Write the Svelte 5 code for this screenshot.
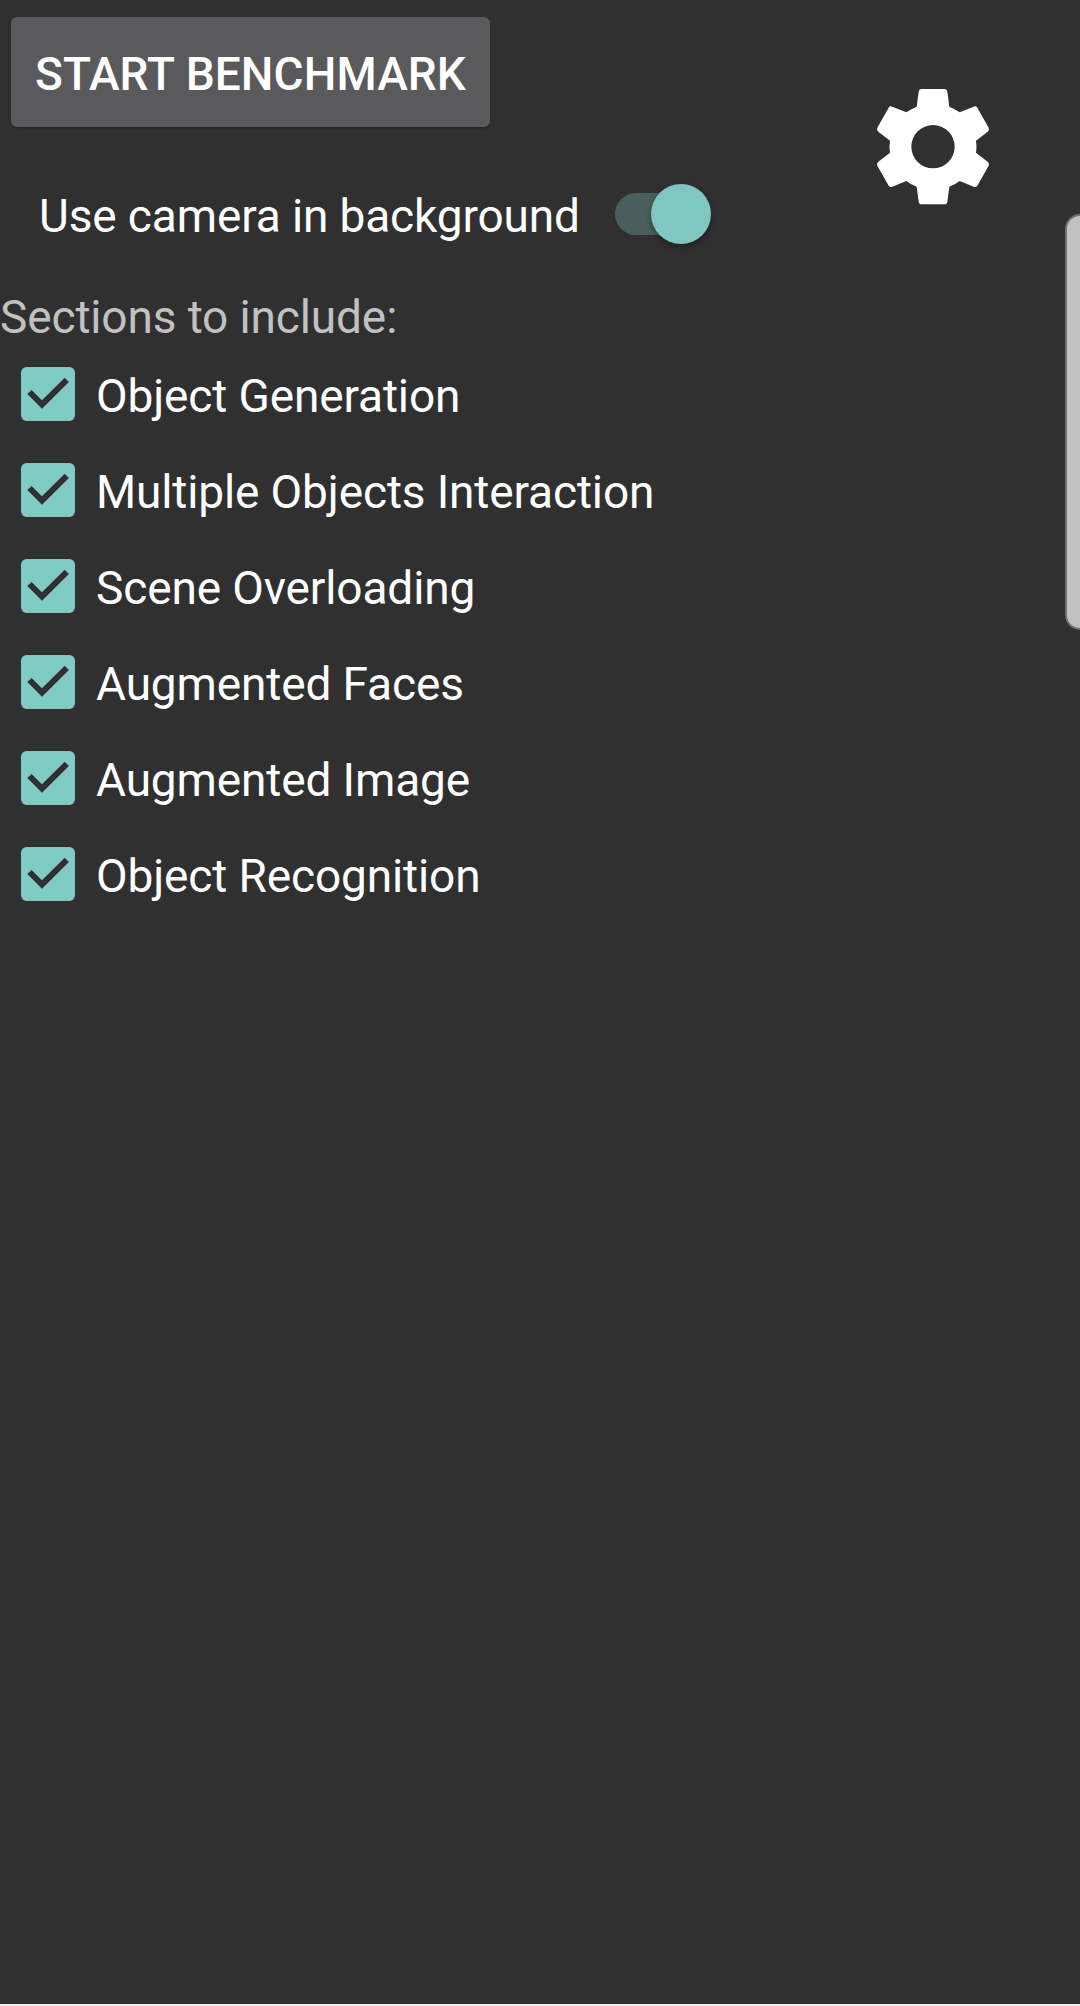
<script>
  let sections = $state([
    { name: 'Object Generation', on: true },
    { name: 'Multiple Objects Interaction', on: true },
    { name: 'Scene Overloading', on: true },
    { name: 'Augmented Faces', on: true },
    { name: 'Augmented Image', on: true },
    { name: 'Object Recognition', on: true },
  ]);
  let camera = $state(true);
</script>

<div class="screen">
  <main>
    <button class="start">START BENCHMARK</button>

    <button class="camera" role="switch" aria-checked={camera} onclick={() => (camera = !camera)}>
      <span>Use camera in background</span>
      <span class="track" class:on={camera}><span class="thumb"></span></span>
    </button>

    <h2>Sections to include:</h2>

    <ul>
      {#each sections as section}
        <li>
          <button
            class="option"
            role="checkbox"
            aria-checked={section.on}
            onclick={() => (section.on = !section.on)}
          >
            <svg class="box" viewBox="0 0 162 162">
              <rect width="162" height="162" rx="17" fill="#80cbc4" />
              {#if section.on}
                <path d="M25.500 75L63 112.500L137.500 38.500" fill="none" stroke="#303030" stroke-width="18" />
              {/if}
            </svg>
            <span>{section.name}</span>
          </button>
        </li>
      {/each}
    </ul>
  </main>

  <button class="settings" aria-label="Settings">
    <svg viewBox="0 0 450 450">
      <path
        fill="#fff"
        fill-rule="evenodd"
        d="M170 110L176 65Q177 57 185 57H253Q261 57 262 65L268 110Q285 117 299 127L341 110Q348 107 352 113L386 173Q389 180 383 185L348 212Q351 230 348 248L383 275Q389 280 386 287L352 347Q348 353 341 350L299 333Q285 344 268 350L262 395Q261 403 253 403H185Q177 403 176 395L170 350Q153 344 139 333L97 350Q90 353 86 347L52 287Q49 280 55 275L90 248Q87 230 90 212L55 185Q49 180 52 173L86 113Q90 107 97 110L139 127Q153 117 170 110ZM219 165A65 65 0 1 0 219 295A65 65 0 1 0 219 165Z"
      />
    </svg>
  </button>

  <div class="edge-handle"></div>
</div>

<style>
  :global(body) {
    margin: 0;
    background: #303030;
  }

  .screen {
    position: relative;
    display: flex;
    justify-content: space-between;
    align-items: flex-start;
    box-sizing: border-box;
    width: 1080px;
    height: 2006px;
    overflow: hidden;
    background: #303030;
    border-bottom: 2px solid #f0eeee;
    color: #fff;
    font: 400 46px/54px Roboto, sans-serif;
    letter-spacing: -0.13px;
  }

  main {
    display: flex;
    flex-direction: column;
    align-items: flex-start;
  }

  button {
    margin: 0;
    padding: 0;
    border: 0;
    background: none;
    color: inherit;
    font: inherit;
    letter-spacing: inherit;
    white-space: nowrap;
  }

  .start {
    width: 479px;
    height: 110px;
    margin: 17px 0 0 11px;
    padding-top: 3px;
    border-radius: 6px;
    background: #5a5a5c;
    box-shadow: 0 1px 3px rgba(0, 0, 0, 0.3);
    font-weight: 500;
    letter-spacing: 0.1px;
  }

  .camera {
    display: flex;
    align-items: center;
    height: 60px;
    gap: 35px;
    margin: 57px 0 0 39px;
  }

  .camera > span:first-child {
    width: 541px;
    padding-top: 4px;
    text-align: left;
  }

  .track {
    display: flex;
    align-items: center;
    width: 84px;
    height: 42px;
    border-radius: 21px;
    background: #4a5f5d;
  }

  .thumb {
    flex: none;
    width: 60px;
    height: 60px;
    border-radius: 50%;
    background: #7fc7c0;
    box-shadow: 0 3px 6px rgba(0, 0, 0, 0.35);
  }

  .on .thumb {
    margin-left: 35.500px;
  }

  h2 {
    margin: 46px 0 0;
    color: #c1c1c1;
    font: inherit;
  }

  ul {
    margin: 2px 0 0;
    padding: 0;
    list-style: none;
  }

  .option {
    display: flex;
    align-items: center;
    height: 96px;
    gap: 21px;
    padding-left: 21px;
  }

  .option span {
    padding-top: 4px;
  }

  .box {
    width: 54px;
    height: 54px;
  }

  .settings {
    width: 150px;
    height: 150px;
    margin: 70px 70px 0 0;
  }

  .settings svg {
    display: block;
    width: 150px;
    height: 150px;
  }

  /* Panel handle lying over the right edge of the screen */
  .edge-handle {
    position: absolute;
    top: 214px;
    right: -15px;
    box-sizing: border-box;
    width: 30px;
    height: 416px;
    border: 2px solid #717171;
    border-radius: 18px;
    background: #c1c1c1;
  }
</style>
